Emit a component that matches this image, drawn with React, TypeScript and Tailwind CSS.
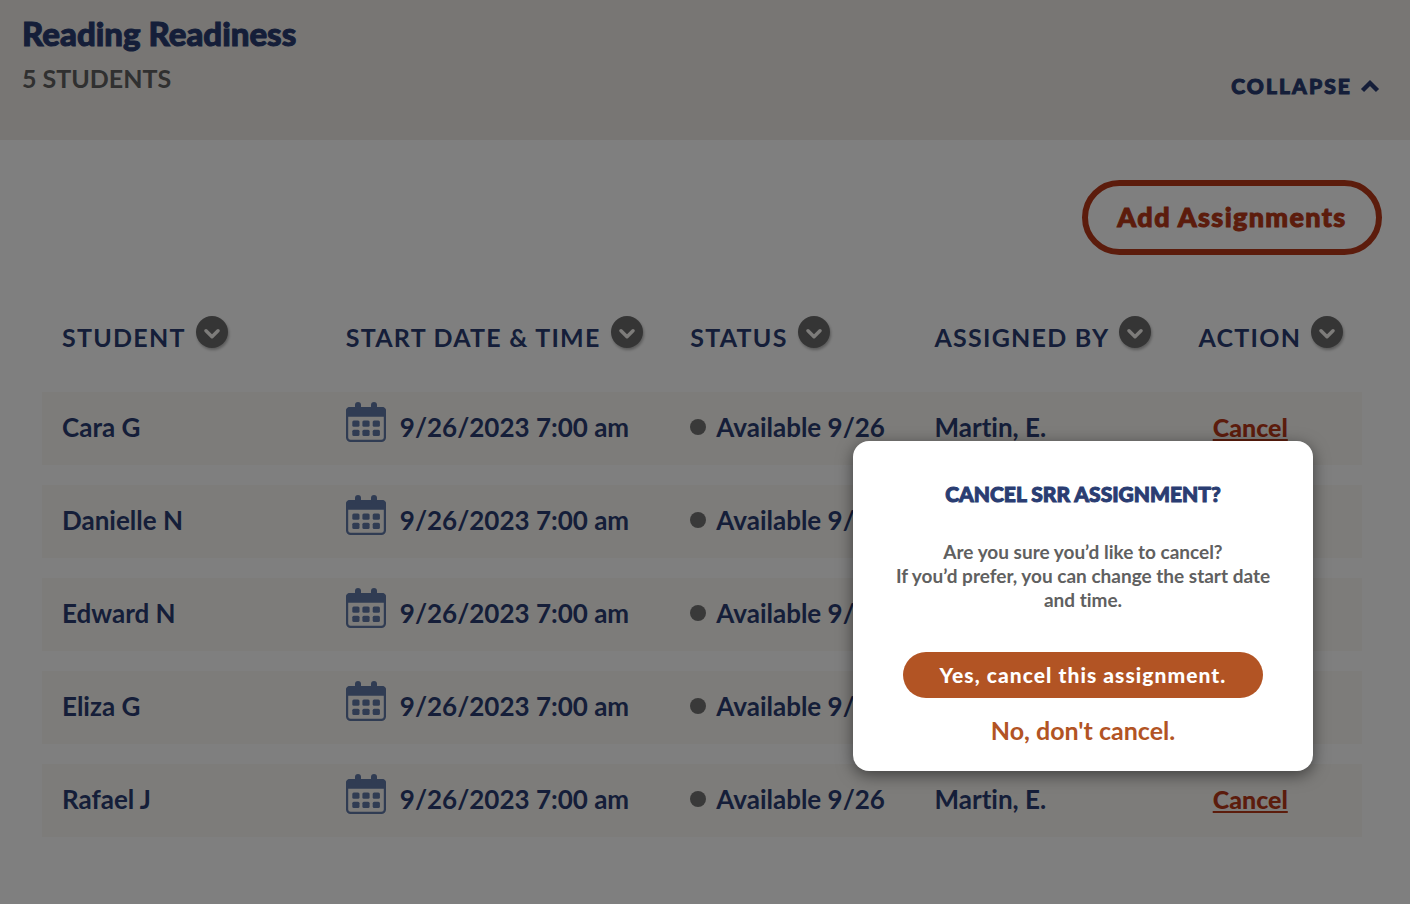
import React from "react";

type Assignment = {
  student: string;
  start: string;
  status: string;
  assignedBy: string;
};

const assignments: Assignment[] = ["Cara G", "Danielle N", "Edward N", "Eliza G", "Rafael J"].map(
  (student) => ({
    student,
    start: "9/26/2023 7:00 am",
    status: "Available 9/26",
    assignedBy: "Martin, E.",
  })
);

const columns = [
  { label: "STUDENT", width: "w-[21.5%]" },
  { label: "START DATE & TIME", width: "w-[26.1%]" },
  { label: "STATUS", width: "w-[18.5%]" },
  { label: "ASSIGNED BY", width: "w-[20%]" },
  { label: "ACTION", width: "w-[13.9%]" },
];

function CalendarIcon() {
  return (
    <svg width="40" height="40" viewBox="0 0 40 40" className="shrink-0 text-[#6078a7]" aria-hidden="true">
      <rect x="1.1" y="6" width="37.8" height="32.9" rx="3.5" fill="none" stroke="currentColor" strokeWidth="2.2" />
      <path d="M0 14.7V9a4 4 0 0 1 4-4h32a4 4 0 0 1 4 4v5.7Z" fill="currentColor" />
      <rect x="9" y="0" width="6" height="9" rx="3" fill="currentColor" />
      <rect x="25" y="0" width="6" height="9" rx="3" fill="currentColor" />
      {[18.5, 27.7].map((y) =>
        [6.3, 16.4, 26.7].map((x) => (
          <rect key={`${x}-${y}`} x={x} y={y} width="7.2" height="6.3" rx="1.5" fill="currentColor" />
        ))
      )}
    </svg>
  );
}

function SortButton({ label }: { label: string }) {
  return (
    <button
      type="button"
      aria-label={`Sort by ${label.toLowerCase()}`}
      className="flex size-8 shrink-0 items-center justify-center rounded-full bg-[#6b6b6b] shadow-[1px_2px_3px_rgba(0,0,0,0.3)]"
    >
      <svg width="16" height="12" viewBox="0 0 16 12" className="mt-1" aria-hidden="true">
        <path d="M2 2.7 8 8.7l6-6" fill="none" stroke="#fbf8f4" strokeWidth="3.4" strokeLinecap="round" strokeLinejoin="round" />
      </svg>
    </button>
  );
}

export default function App() {
  return (
    <div className="relative min-h-screen bg-white font-['Lato','Open_Sans',sans-serif] font-bold text-[#2a3d72] [font-variant-ligatures:none]">
      <header className="flex h-[140px] items-start justify-between bg-[#f0ede9] px-[22px] pt-3">
        <div>
          <h1 className="text-[33px] leading-[42px] font-black [-webkit-text-stroke:1px]">Reading Readiness</h1>
          <p className="mt-[6px] text-[25px] leading-9 text-[#606060]">5 STUDENTS</p>
        </div>
        <button type="button" className="mt-[58px] mr-2 flex items-center gap-2 text-[21px] leading-8 font-black tracking-widest">
          <span className="[-webkit-text-stroke:1px]">COLLAPSE</span>
          <svg width="20" height="14" viewBox="0 0 20 14" aria-hidden="true">
            <path d="M2.5 11.5 10 4l7.5 7.5" fill="none" stroke="currentColor" strokeWidth="4.4" />
          </svg>
        </button>
      </header>

      <main className="pt-10 pr-12 pb-12 pl-[42px]">
        <div className="-mr-5 flex justify-end">
          <button
            type="button"
            className="h-[75px] w-[300px] rounded-full border-6 border-[#b83919] text-[27px] font-black tracking-wider text-[#b83919] [-webkit-text-stroke:1px]"
          >
            Add Assignments
          </button>
        </div>

        <table className="mt-5 w-full table-fixed border-separate border-spacing-x-0 border-spacing-y-5 text-left">
          <thead>
            <tr>
              {columns.map((c) => (
                <th key={c.label} scope="col" className={`${c.width} h-[77px] pt-[21px] pl-5 align-top font-bold`}>
                  <div className="flex items-start gap-[10px] whitespace-nowrap">
                    <span className="pt-1 text-[25px] leading-[34px] tracking-wider">{c.label}</span>
                    <SortButton label={c.label} />
                  </div>
                </th>
              ))}
            </tr>
          </thead>
          <tbody>
            {assignments.map((a) => (
              <tr key={a.student} className="h-[73px] bg-[#fbf8f4] text-[26px] leading-9 whitespace-nowrap">
                <td className="pb-1 pl-5">{a.student}</td>
                <td className="pb-1 pl-5">
                  <div className="flex items-center gap-[14px]">
                    <div className="-mt-[10px]"><CalendarIcon /></div>
                    {a.start}
                  </div>
                </td>
                <td className="pb-1 pl-5">
                  <div className="flex items-center gap-[10px]">
                    <span className="size-4 shrink-0 rounded-full bg-[#737373]" />
                    {a.status}
                  </div>
                </td>
                <td className="pb-1 pl-5">{a.assignedBy}</td>
                <td className="pr-10 pb-1 text-center">
                  <a href="#cancel" className="text-[25px] font-black text-[#b83919] underline decoration-2 underline-offset-2">
                    Cancel
                  </a>
                </td>
              </tr>
            ))}
          </tbody>
        </table>
      </main>

      <div className="absolute inset-0 bg-black/50" />

      <section
        role="dialog"
        aria-modal="true"
        aria-labelledby="cancel-title"
        className="absolute top-[441px] right-[97px] flex w-[460px] flex-col items-center rounded-2xl bg-white px-10 pt-[37px] pb-[21px] text-center shadow-[0_4px_16px_rgba(0,0,0,0.5)]"
      >
        <h2 id="cancel-title" className="text-[21px] leading-8 font-black [-webkit-text-stroke:1px]">
          CANCEL SRR ASSIGNMENT?
        </h2>
        <p className="mt-[30px] text-[19px] leading-6 text-[#606060]">
          Are you sure you’d like to cancel?
          <br />
          If you’d prefer, you can change the start date and time.
        </p>
        <button type="button" className="mt-10 h-[46px] w-[360px] rounded-full bg-[#b25424] text-[21px] font-black tracking-wider text-white">
          Yes, cancel this assignment.
        </button>
        <button type="button" className="mt-3 text-[25px] leading-10 text-[#b25424]">
          No, don't cancel.
        </button>
      </section>
    </div>
  );
}
